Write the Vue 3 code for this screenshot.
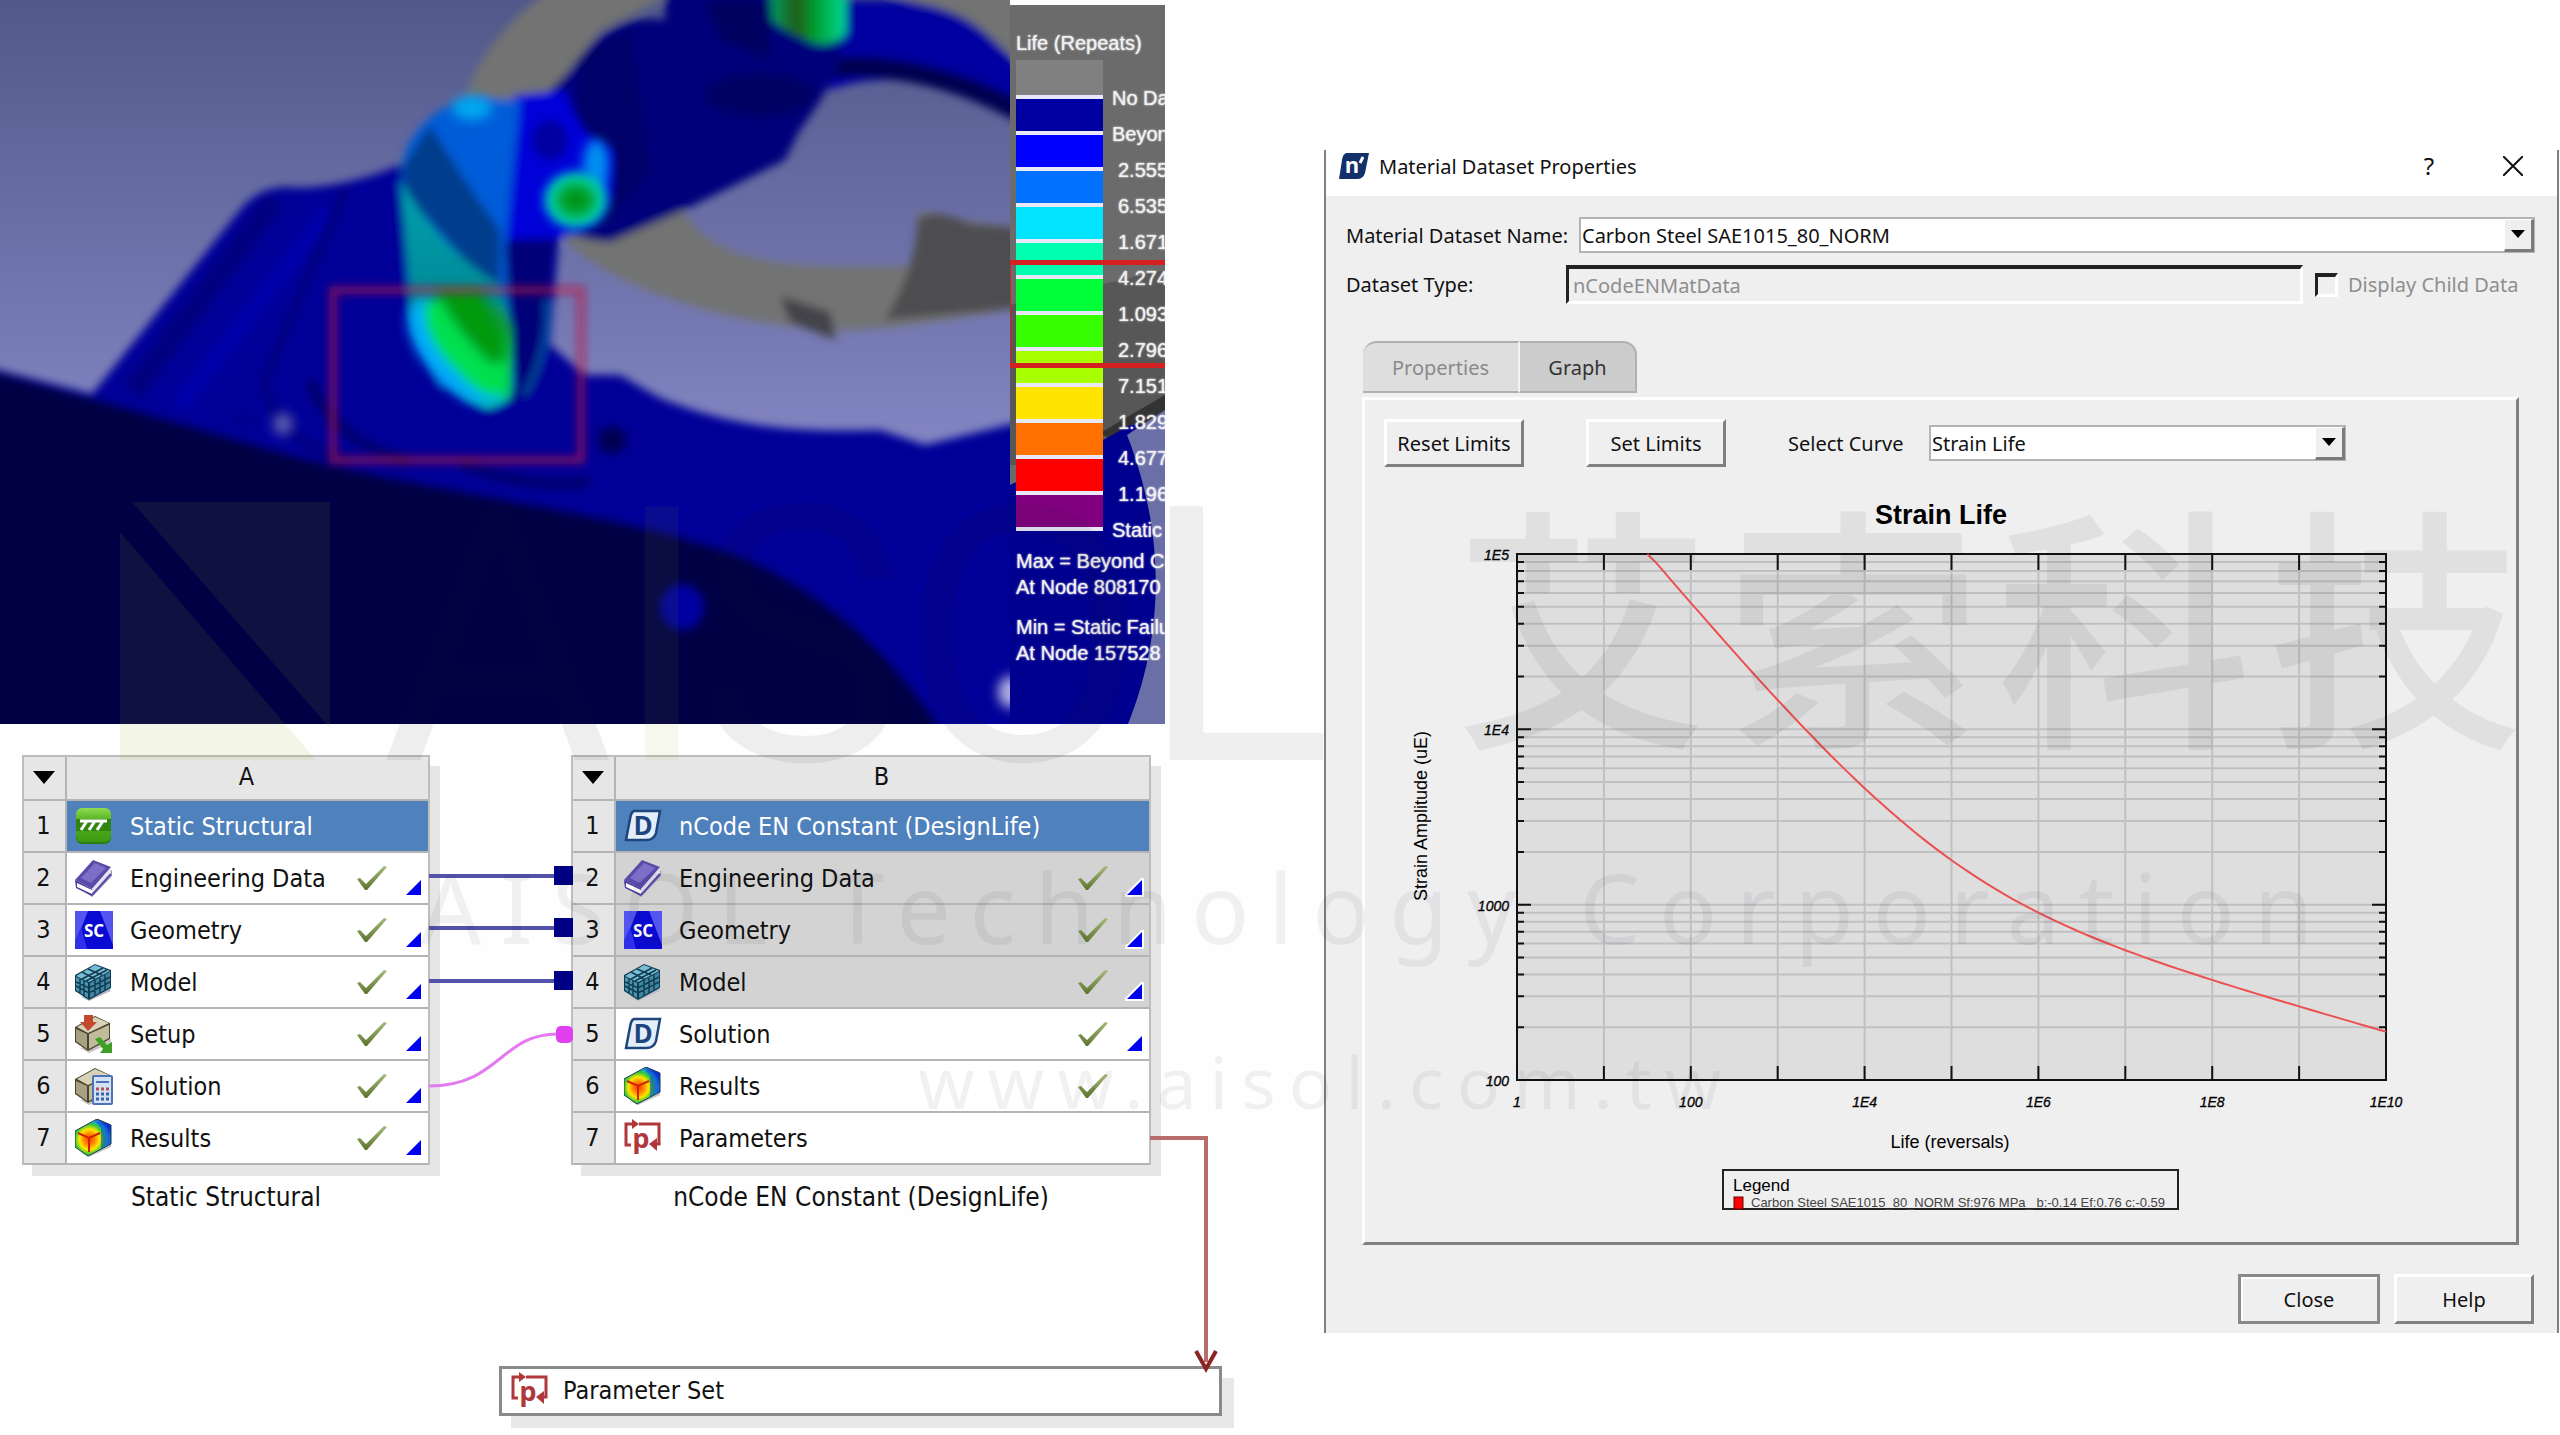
<script setup>
import { ref } from 'vue'

const swatches = [
  '#808080', '#0000a0', '#0000ff', '#0070ff', '#00e4ff', '#00ffb0', '#00ff38',
  '#38ff00', '#a8ff00', '#ffe400', '#ff7000', '#ff0000', '#800080'
]
const bands = ['No Data', 'Beyond Cutoff', '2.555e4', '6.535e3', '1.671e3', '4.274e2', '1.093e2', '2.796e1', '7.151', '1.829', '4.677e-1', '1.196e-1', 'Static Failure']

const systems = [
  {
    id: 'A',
    title: 'Static Structural',
    rows: [
      { icon: 'static', name: 'Static Structural', head: true },
      { icon: 'book', name: 'Engineering Data', check: true, tri: true },
      { icon: 'sc', name: 'Geometry', check: true, tri: true },
      { icon: 'mesh', name: 'Model', check: true, tri: true },
      { icon: 'setup', name: 'Setup', check: true, tri: true },
      { icon: 'calc', name: 'Solution', check: true, tri: true },
      { icon: 'results', name: 'Results', check: true, tri: true }
    ]
  },
  {
    id: 'B',
    title: 'nCode EN Constant (DesignLife)',
    rows: [
      { icon: 'design', name: 'nCode EN Constant (DesignLife)', head: true },
      { icon: 'book', name: 'Engineering Data', check: true, tri: true, shared: true },
      { icon: 'sc', name: 'Geometry', check: true, tri: true, shared: true },
      { icon: 'mesh', name: 'Model', check: true, tri: true, shared: true },
      { icon: 'design', name: 'Solution', check: true, tri: true },
      { icon: 'results', name: 'Results', check: true },
      { icon: 'param', name: 'Parameters' }
    ]
  }
]

const dataset = ref('Carbon Steel SAE1015_80_NORM')
const curve = ref('Strain Life')

// Plot frame and log-log scales
const L = 1517, R = 2386, T = 554, B = 1080
const px = d => L + (d * (R - L)) / 10
const py = e => B - ((e - 2) * (B - T)) / 3
const xGrid = [1, 2, 3, 4, 5, 6, 7, 8, 9].map(px)
const yGrid = []
for (let d = 2; d < 5; d++) {
  for (let k = 1; k < 10; k++) {
    if (d === 2 && k === 1) continue
    yGrid.push({ y: py(d + Math.log10(k)), major: k === 1 })
  }
}
const xLabels = [['1', 0], ['100', 2], ['1E4', 4], ['1E6', 6], ['1E8', 8], ['1E10', 10]]
const yLabels = [['1E5', 5], ['1E4', 4], ['1000', 3], ['100', 2]]

// Strain-life relation: Sf/E * N^b + Ef * N^c, in microstrain
const strain = d => 1e6 * ((976 / 207000) * 10 ** (-0.14 * d) + 0.76 * 10 ** (-0.59 * d))
const points = []
for (let d = 1.5; d <= 10.001; d += 0.1) {
  points.push(px(d).toFixed(1) + ',' + Math.max(T, py(Math.log10(strain(d)))).toFixed(1))
}
const curvePoints = points.join(' ')
</script>

<template>
  <main class="page">
    <!-- shared icon set -->
    <svg class="defs" aria-hidden="true">
      <defs>
        <linearGradient id="gGreen" x1="0" y1="0" x2="0" y2="1">
          <stop offset="0" stop-color="#8fdc50" /><stop offset=".4" stop-color="#4fae1c" /><stop offset="1" stop-color="#3f9a12" />
        </linearGradient>
        <radialGradient id="gHeat" cx=".4" cy=".55" r=".62">
          <stop offset="0" stop-color="#ff3a00" /><stop offset=".25" stop-color="#ff8a00" /><stop offset=".45" stop-color="#ffe600" />
          <stop offset=".65" stop-color="#35c935" /><stop offset=".82" stop-color="#20a8e0" /><stop offset="1" stop-color="#0a2fd0" />
        </radialGradient>
        <linearGradient id="gCheck" x1="0" y1="0" x2="0" y2="1">
          <stop offset="0" stop-color="#a4bc7c" /><stop offset="1" stop-color="#5c742c" />
        </linearGradient>
        <symbol id="static" viewBox="0 0 38 38">
          <rect x="1" y="3" width="35" height="34" rx="6" fill="#2d7d10" />
          <rect x="1" y="1" width="35" height="34" rx="6" fill="url(#gGreen)" />
          <rect x="1" y="12" width="35" height="12" fill="#2f8510" />
          <path d="M5 14H32M12 14L6 23M20 14L14 23M28 14L22 23" stroke="#fff" stroke-width="3" fill="none" />
        </symbol>
        <symbol id="book" viewBox="0 0 38 38">
          <path d="M3 28L17 38L37 17V11L18 31Z" fill="#9a96b8" />
          <path d="M0 21L18 1L36 8L17 30Z" fill="#5b4ba8" />
          <path d="M6 19L20 4L31 9L16 24Z" fill="#7c6fc8" />
          <path d="M0 21L17 30V37L1 29Z" fill="#4a3a98" />
          <path d="M2 24L17 31V35L2 28Z" fill="#fff" />
          <path d="M17 30L36 9V15L17 36Z" fill="#e4e2f2" /><path d="M17 36L36 15" stroke="#5b4ba8" stroke-width="2" />
        </symbol>
        <symbol id="sc" viewBox="0 0 38 38">
          <rect width="38" height="38" fill="#5454f0" />
          <path d="M13 0H25L38 34V38H0V34Z" fill="#0a0ad2" /><path d="M0 38V30L6 16L12 38Z" fill="#3030e8" />
          <text x="19" y="26" text-anchor="middle" class="sc-text">SC</text>
        </symbol>
        <symbol id="mesh" viewBox="0 0 38 38">
          <path d="M6 34L14 38L36 28L34 24Z" fill="#b8bfc4" />
          <path d="M0 12L20 1L36 7V25L14 37L0 28Z" fill="#123c50" />
          <path d="M1 13L20 2L35 8L14 19Z" fill="#79bcd6" /><path d="M1 14L13 20V35L1 27Z" fill="#4b95b4" /><path d="M15 20L35 9V24L15 35Z" fill="#3f86a4" />
          <path d="M7 9L20 16M13 6L27 12M7 16L28 5M11 18L32 7M5 16V30M9 18V33M1 19L14 25L35 14M1 23L14 30L35 19M20 17V33M25 15V30M30 12V27" stroke="#123c50" stroke-width="1.5" fill="none" />
        </symbol>
        <symbol id="block" viewBox="0 0 38 38">
          <path d="M5 33L14 38L36 28V24Z" fill="#c9c7c0" />
          <path d="M0 12L20 1L35 8V24L13 36L0 27Z" fill="#4b4530" />
          <path d="M2 12L20 2L34 8L13 18Z" fill="#d8d2b8" /><path d="M1 14L12 19V34L1 26Z" fill="#a8a080" /><path d="M14 19L34 10V23L14 34Z" fill="#c2bb9a" />
        </symbol>
        <symbol id="setup" viewBox="0 0 38 38">
          <use href="#block" />
          <path d="M9 0H18V7H22L13 16L5 7H9Z" fill="#c4482c" />
          <path d="M20 24L25 22L32 30L37 27V38H25L28 34Z" fill="#3da024" />
        </symbol>
        <symbol id="calc" viewBox="0 0 38 38">
          <use href="#block" />
          <rect x="17" y="8" width="21" height="30" rx="2" fill="#4d73b4" /><rect x="19" y="10" width="17" height="26" fill="#d5e2f6" />
          <path d="M21 15H34" stroke="#4d73b4" stroke-width="2" />
          <path d="M21 22H34" stroke="#b05050" stroke-width="3" stroke-dasharray="3 2" />
          <path d="M21 27H34M21 32H34" stroke="#3c62a8" stroke-width="3" stroke-dasharray="3 2" />
        </symbol>
        <symbol id="results" viewBox="0 0 38 38">
          <path d="M6 34L14 38L36 28V24Z" fill="#c4c4c4" />
          <path d="M0 12L22 0L36 6V25L13 37L0 28Z" fill="url(#gHeat)" stroke="#1c3c50" stroke-width="1" />
          <path d="M34 5V25L26 30V9L20 2Z" fill="#0a2fd0" opacity=".45" />
          <path d="M3 14L14 19L25 14M14 19V33" stroke="#d02000" stroke-width="2" fill="none" />
        </symbol>
        <symbol id="design" viewBox="0 0 38 38">
          <path d="M10 4H36L32 26Q30 33 22 33H2L6 12Q7 5 10 4Z" fill="#e4eefa" stroke="#1d467c" stroke-width="2.5" />
          <text x="19" y="28" text-anchor="middle" class="d-text">D</text>
        </symbol>
        <symbol id="param" viewBox="0 0 38 38">
          <path d="M11 5H2V26H7M15 5H35V25H30" fill="none" stroke="#b0383a" stroke-width="3" />
          <path d="M8 0L15 5L8 10ZM33 19V32L25 25Z" fill="#b0383a" />
          <text x="17" y="29" text-anchor="middle" class="p-text">p</text>
        </symbol>
        <symbol id="check" viewBox="0 0 30 24">
          <path d="M0 13L3 12L9 18L27 0L30 1L10 24H8Z" fill="url(#gCheck)" />
        </symbol>
      </defs>
    </svg>

    <section class="left">
      <div class="shot">
        <svg class="model" viewBox="0 0 1010 724" preserveAspectRatio="none" role="img" aria-label="Fatigue life contour">
          <defs>
            <linearGradient id="sky" x1="0" y1="0" x2="0" y2="1">
              <stop offset="0" stop-color="#52588a" /><stop offset=".6" stop-color="#8184c0" /><stop offset="1" stop-color="#8184c0" />
            </linearGradient>
            <linearGradient id="shank" x1="0" y1="0" x2="0" y2="1">
              <stop offset="0" stop-color="#00a0b0" /><stop offset=".5" stop-color="#008c98" /><stop offset=".62" stop-color="#109848" /><stop offset="1" stop-color="#00c050" />
            </linearGradient>
            <radialGradient id="hot">
              <stop offset="0" stop-color="#068c08" /><stop offset=".4" stop-color="#00a838" /><stop offset=".7" stop-color="#00d8b0" /><stop offset="1" stop-color="#0060ff" stop-opacity="0" />
            </radialGradient>
            <linearGradient id="tab" x1="0" y1="0" x2="1" y2="0">
              <stop offset="0" stop-color="#00a060" /><stop offset=".35" stop-color="#205c18" /><stop offset=".6" stop-color="#00a030" /><stop offset="1" stop-color="#00d898" />
            </linearGradient>
            <filter id="b3" x="-10%" y="-10%" width="120%" height="120%"><feGaussianBlur stdDeviation="4" /></filter>
            <filter id="b8" x="-40%" y="-40%" width="180%" height="180%"><feGaussianBlur stdDeviation="6" /></filter>
          </defs>
          <rect width="1010" height="724" fill="url(#sky)" />
          <g filter="url(#b3)">
            <path d="M465 105C470 70 500 25 550 -10H680L600 30L545 100L500 115Z" fill="#727372" />
            <path d="M880 -10H1020V60L965 20Z" fill="#727372" />
            <path d="M560 235L680 205C700 245 740 262 820 266H930L915 215Q930 208 960 220L1020 228V308C960 318 900 328 850 330C740 330 620 290 570 245Z" fill="#727372" />
            <path d="M918 218Q940 208 970 224L1020 228V308L885 320Q915 270 918 218Z" fill="#4e4e50" />
            <path d="M780 296L830 312L836 340L790 322Z" fill="#424248" />
            <path d="M820 0H900C960 8 985 25 1020 70V120C950 78 880 70 830 90Z" fill="#0000a0" />
            <path d="M820 68Q920 58 1020 112" fill="none" stroke="#000050" stroke-width="20" />
            <path d="M-10 368L92 394L240 210Q262 182 300 188Q350 186 400 165L560 225L550 345L585 375H620L660 398C740 430 800 432 880 430L925 445L1020 422V734H-10Z" fill="#000098" />
            <path d="M275 200L132 392" stroke="#000080" stroke-width="22" />
            <path d="M330 210L180 405" stroke="#0000ac" stroke-width="16" />
            <path d="M345 190L265 380Q270 440 350 460" fill="none" stroke="#000080" stroke-width="10" />
            <path d="M310 380Q330 440 410 462M460 462Q520 490 590 482" fill="none" stroke="#000070" stroke-width="12" />
            <path d="M-10 370L100 400L300 457C480 500 640 515 750 560C850 605 910 680 945 734H-10Z" fill="#000044" />
            <path d="M665 -10H840V60Q830 90 800 130L785 160L680 212L610 242Q560 240 530 200L530 110L570 70Q610 10 665 20Z" fill="#00007a" />
            <path d="M580 60Q600 40 630 30L650 170L600 230L580 150Z" fill="#000068" />
            <ellipse cx="760" cy="95" rx="55" ry="22" fill="#000064" />
            <path d="M705 0H770V60L720 40Z" fill="#000060" />
            <path d="M770 -10H846V32Q840 44 818 44Q790 36 772 20Z" fill="url(#tab)" />
            <path d="M500 230H555L545 345Q540 390 520 400L500 380Z" fill="#000078" />
            <path d="M515 95L565 90Q580 140 612 150V190Q600 230 560 238L505 240L480 150Z" fill="#0000d8" />
            <ellipse cx="550" cy="140" rx="18" ry="20" fill="#0000a0" />
            <path d="M402 170Q404 135 440 110L475 98L520 100L505 250L515 390L440 385L408 290Z" fill="#005cd8" />
            <path d="M404 165L430 125Q470 190 500 230V300Q440 230 404 195Z" fill="#003c8c" />
            <path d="M400 180Q440 250 500 285L512 330L510 398L488 408Q430 375 412 310Z" fill="url(#shank)" />
            <path d="M547 300Q550 350 524 395" fill="none" stroke="#0070b0" stroke-opacity=".7" stroke-width="5" />
          </g>
          <g filter="url(#b8)">
            <ellipse cx="472" cy="108" rx="20" ry="12" fill="#00a8f0" />
            <ellipse cx="596" cy="165" rx="13" ry="26" fill="#0090f0" />
            <path d="M410 305Q400 340 440 380Q475 416 504 402L508 385Q440 350 425 295Z" fill="#00a8ff" />
            <path d="M424 305Q422 340 457 372Q487 406 508 394V340L460 290Z" fill="#00e050" />
            <path d="M436 290Q450 325 492 365L506 360V340L480 290Z" fill="#069a10" />
            <ellipse cx="243" cy="420" rx="14" ry="10" fill="#00008c" />
            <ellipse cx="283" cy="424" rx="10" ry="11" fill="#5c5cb0" />
            <ellipse cx="612" cy="440" rx="14" ry="13" fill="#00004c" />
            <ellipse cx="1010" cy="692" rx="12" ry="16" fill="#b0b0e0" />
          </g>
          <g filter="url(#b3)">
            <ellipse cx="576" cy="200" rx="38" ry="34" fill="url(#hot)" />
            <ellipse cx="682" cy="607" rx="22" ry="23" fill="#0000a0" />
            <rect x="333" y="290" width="248" height="170" fill="none" stroke="#c01040" stroke-opacity=".6" stroke-width="8" />
          </g>
        </svg>
        <aside class="scale">
          <svg class="scale-bg" viewBox="0 0 155 719" preserveAspectRatio="none" aria-hidden="true">
            <rect width="155" height="719" fill="#6a6b6a" />
            <path d="M0 300L155 265V460H0Z" fill="#565756" />
            <path d="M90 428L155 390V430L110 440Z" fill="#333" />
            <path d="M0 480L95 434L120 420H155V719H0Z" fill="#00008e" />
            <path d="M117 430L155 405V719H118C150 640 160 540 117 430Z" fill="#6a6fa8" />
          </svg>
          <p class="scale-title">Life (Repeats)</p>
          <div class="scale-body">
            <ul class="bar"><li v-for="c in swatches" :key="c" :style="{ background: c }"></li></ul>
            <ul class="bands"><li v-for="(b, i) in bands" :key="b" :class="{ num: i > 1 && i < 12 }">{{ b }}</li></ul>
          </div>
          <p class="stat">Max = Beyond Cutoff<br />At Node 808170</p>
          <p class="stat">Min = Static Failure<br />At Node 157528</p>
          <div class="range"></div>
        </aside>
      </div>

      <div class="canvas">
        <figure v-for="s in systems" :key="s.id" class="node" :class="'node-' + s.id">
          <table>
            <colgroup><col class="num-col" /><col /></colgroup>
            <thead>
              <tr><th><svg class="caret" viewBox="0 0 22 13"><path d="M0 0H22L11 13Z" /></svg></th><th>{{ s.id }}</th></tr>
            </thead>
            <tbody>
              <tr v-for="(r, i) in s.rows" :key="i" :class="{ head: r.head, shared: r.shared }">
                <th>{{ i + 1 }}</th>
                <td>
                  <div class="cell">
                    <svg class="icon"><use :href="'#' + r.icon" /></svg>
                    <span class="name">{{ r.name }}</span>
                    <svg v-if="r.check" class="check"><use href="#check" /></svg>
                    <svg v-if="r.tri" class="tri" viewBox="0 0 19 19"><path d="M17 2V17H2Z" fill="#0000f0" :stroke="r.shared ? '#fff' : 'none'" stroke-width="4" paint-order="stroke" /></svg>
                  </div>
                </td>
              </tr>
            </tbody>
          </table>
          <figcaption>{{ s.title }}</figcaption>
        </figure>

        <div class="param-set">
          <svg class="icon"><use href="#param" /></svg>
          <span>Parameter Set</span>
        </div>

        <svg class="links" viewBox="0 724 1324 711" aria-hidden="true">
          <g v-for="y in [876, 928, 981]" :key="y">
            <path :d="`M429 ${y}H556`" stroke="#5252a8" stroke-width="4" />
            <rect x="554" :y="y - 10" width="19" height="19" fill="#000084" />
          </g>
          <path d="M429 1086C500 1086 500 1034 558 1034" fill="none" stroke="#e47af0" stroke-width="3" />
          <rect x="556" y="1026" width="17" height="17" rx="5" fill="#e040f0" />
          <path d="M1150 1138H1206V1362" fill="none" stroke="#b86c6c" stroke-width="4" />
          <path d="M1196 1351L1206 1369L1216 1351" fill="none" stroke="#8c2424" stroke-width="4" />
        </svg>
      </div>
    </section>

    <section class="dialog" aria-label="Material Dataset Properties">
      <header class="titlebar">
        <svg class="logo" viewBox="0 0 30 26">
          <path d="M8 0H30L26 20Q24 26 18 26H0L3 7Q4 0 8 0Z" fill="#12306a" />
          <text x="13" y="20" text-anchor="middle" class="n-text">n</text>
          <path d="M21 10L24 4" stroke="#fff" stroke-width="3" />
        </svg>
        <h1>Material Dataset Properties</h1>
        <button class="tool" type="button">?</button>
        <button class="tool" type="button" aria-label="Close window"><svg viewBox="0 0 20 20"><path d="M0 0L20 20M20 0L0 20" stroke="#111" stroke-width="2" /></svg></button>
      </header>

      <div class="body">
        <div class="row">
          <label class="lab-name" for="ds">Material Dataset Name:</label>
          <div class="combo"><select id="ds" v-model="dataset"><option>Carbon Steel SAE1015_80_NORM</option></select><span class="drop"></span></div>
        </div>
        <div class="row second">
          <label class="lab-type" for="type">Dataset Type:</label>
          <input id="type" class="field" type="text" value="nCodeENMatData" disabled />
          <label class="child"><input type="checkbox" disabled />Display Child Data</label>
        </div>

        <nav class="tabs">
          <button type="button" class="tab dim">Properties</button>
          <button type="button" class="tab active">Graph</button>
        </nav>

        <div class="panel">
          <div class="toolbar">
            <button type="button" class="btn">Reset Limits</button>
            <button type="button" class="btn">Set Limits</button>
            <label for="cv">Select Curve</label>
            <div class="combo small"><select id="cv" v-model="curve"><option>Strain Life</option></select><span class="drop"></span></div>
          </div>

          <svg class="chart" viewBox="1365 480 1151 740" role="img" aria-label="Strain Life chart">
            <text x="1941" y="524" text-anchor="middle" class="c-title">Strain Life</text>
            <rect :x="L" :y="T" :width="R - L" :height="B - T" fill="#dfdedf" />
            <g stroke="#c0c0c1" stroke-width="2">
              <path v-for="x in xGrid" :key="x" :d="`M${x} ${T}V${B}`" />
              <path v-for="g in yGrid" :key="g.y" :d="`M${L} ${g.y}H${R}`" />
            </g>
            <g stroke="#111" stroke-width="2">
              <path v-for="x in xGrid" :key="x" :d="`M${x} ${T}v16M${x} ${B}v-14`" />
              <path v-for="g in yGrid" :key="g.y" :d="g.major ? `M${L} ${g.y}h14M${R} ${g.y}h-14` : `M${L} ${g.y}h7M${R} ${g.y}h-7`" />
            </g>
            <rect :x="L" :y="T" :width="R - L" :height="B - T" fill="none" stroke="#111" stroke-width="2" />
            <polyline :points="curvePoints" fill="none" stroke="#ec5050" stroke-width="2" />
            <text v-for="t in xLabels" :key="t[0]" :x="px(t[1])" y="1107" text-anchor="middle" class="tick">{{ t[0] }}</text>
            <text v-for="t in yLabels" :key="t[0]" x="1509" :y="py(t[1]) + 6" text-anchor="end" class="tick">{{ t[0] }}</text>
            <text x="1950" y="1148" text-anchor="middle" class="axis">Life (reversals)</text>
            <text transform="translate(1427 816) rotate(-90)" text-anchor="middle" class="axis">Strain Amplitude (uE)</text>
            <rect x="1723" y="1170" width="455" height="39" fill="none" stroke="#222" stroke-width="2" />
            <text x="1733" y="1191" class="leg">Legend</text>
            <rect x="1734" y="1197" width="9" height="12" fill="#f00" stroke="#600" />
            <text x="1751" y="1207" class="leg-item">Carbon Steel SAE1015_80_NORM Sf:976 MPa_ b:-0.14 Ef:0.76 c:-0.59</text>
          </svg>
        </div>

        <footer class="actions">
          <button type="button" class="btn framed">Close</button>
          <button type="button" class="btn">Help</button>
        </footer>
      </div>
    </section>

    <svg class="mark" viewBox="0 0 2560 1435" aria-hidden="true">
      <g fill="#91af19" fill-opacity=".1"><path d="M132 502H330V728Z" /><path d="M120 532L316 760H120Z" /></g>
      <g class="brand">
        <text x="381" y="760">A</text><text x="613" y="760" class="lime">I</text><text x="694" y="760">S</text><text x="900" y="760">O</text><text x="1140" y="760">L</text>
      </g>
      <text x="1454" y="728" class="cjk">艾索科技</text>
      <text x="420" y="944" class="corp">AISOL Technology Corporation</text>
      <text x="918" y="1109" class="site">www.aisol.com.tw</text>
    </svg>
  </main>
</template>

<style>
body { margin: 0; background: #fefefe; }
</style>

<style scoped>
* { box-sizing: border-box; }
.page { position: relative; display: grid; grid-template-columns: 1324fr 1236fr; align-items: start; overflow: hidden; font-family: "Noto Sans", "Open Sans", sans-serif; font-size: 20px; color: #111; }
.defs { position: absolute; width: 0; height: 0; }
.left { min-width: 0; }

.shot { display: flex; height: 724px; }
.model { width: 1010px; height: 724px; }
.scale { position: relative; overflow: hidden; width: 155px; margin-top: 5px; padding-left: 6px; color: #f2f2f2; font: 20px/26px "Liberation Sans", Arial, sans-serif; text-shadow: 0 0 2px #fff; white-space: nowrap; }
.scale-bg { position: absolute; left: 0; top: 0; width: 100%; height: 100%; }
.scale > p, .scale-body { position: relative; margin: 0; }
.scale-title { padding: 25px 0 4px; }
.scale-body { display: flex; gap: 9px; }
.scale ul { margin: 0; padding: 0; list-style: none; }
.bar { width: 90px; }
.bar li { width: 87px; height: 36px; border-bottom: 4px solid #e8e8fa; }
.bar li:first-child { height: 39px; }
.scale .bands { padding-top: 20px; }
.bands li { height: 36px; line-height: 36px; }
.bands .num { padding-left: 6px; }
.scale .stat { padding-bottom: 14px; }
.range { position: absolute; left: 0; right: 0; top: 255px; height: 108px; border: solid #d42020; border-width: 5px 0 5px 1px; }

.canvas { position: relative; height: 711px; font: 25px/28px "DejaVu Sans Condensed", "Noto Sans", sans-serif; }
.node { position: absolute; top: 31px; margin: 0; }
.node-A { left: 22px; width: 408px; }
.node-B { left: 571px; width: 580px; }
.node table { width: 100%; table-layout: fixed; border-collapse: separate; border-spacing: 0; border: 2px solid #bdbdbd; border-bottom: 0; background: #fff; box-shadow: 10px 11px 0 #e6e6e6; }
.num-col { width: 43px; }
.node th { padding: 0 2px 0 0; font-weight: 400; background: #e7e6e7; border-bottom: 2px solid #b4b4b4; text-align: center; }
.node th:first-child { border-right: 2px solid #b4b4b4; }
.node thead th { height: 44px; padding-bottom: 2px; }
.node tbody th { height: 52px; }
.node td { padding: 0; border-bottom: 2px solid #b4b4b4; }
.caret { display: block; width: 22px; height: 13px; margin: 0 auto; }
.cell { position: relative; display: flex; align-items: center; height: 50px; padding: 0 41px 0 8px; }
.head td { background: #4f81bd; color: #fff; }
.shared td { background: #d3d3d3; }
.icon { width: 38px; height: 38px; flex: none; }
.name { margin-left: 17px; padding-top: 2px; flex: 1; white-space: nowrap; }
.check { width: 30px; height: 24px; }
.tri { position: absolute; right: 5px; bottom: 6px; width: 19px; height: 19px; }
figcaption { margin-top: 18px; font-size: 26px; text-align: center; white-space: nowrap; }
.param-set { position: absolute; left: 499px; top: 642px; width: 723px; height: 50px; display: flex; align-items: center; gap: 14px; padding-left: 9px; background: #fff; border: 3px solid #8a8a8a; box-shadow: 12px 12px 0 #e8e8e8; }
.links { position: absolute; left: 0; top: 0; width: 1324px; height: 711px; }
.sc-text { font: 700 17px "Open Sans", sans-serif; fill: #fff; }
.d-text { font: 700 26px "Open Sans", sans-serif; fill: #1d467c; }
.p-text { font: 700 27px "Noto Sans", sans-serif; fill: #b0383a; }
.n-text { font: 700 22px "Open Sans", sans-serif; fill: #fff; }

.dialog { margin: 150px 1px 0 0; border: solid #808080; border-width: 0 2px; background: #f0eff0; }
.titlebar { display: flex; align-items: center; height: 46px; padding: 0 24px 0 13px; background: #fff; }
.logo { width: 30px; height: 26px; margin-bottom: 14px; }
h1 { flex: 1; margin: 0 0 12px 10px; font-size: 20px; line-height: 28px; font-weight: 400; }
.tool { width: 40px; height: 40px; margin: 0 0 14px 44px; padding: 0; border: 0; background: none; font: 24px/28px "Noto Sans", sans-serif; color: #111; }
.tool svg { width: 20px; height: 20px; display: block; margin: 0 auto; }
.body { padding: 21px 22px 9px 20px; }
.row { display: flex; align-items: center; height: 36px; }
.row.second { height: 39px; margin-top: 12px; }
.lab-name { width: 233px; }
.lab-type { width: 220px; }
.combo { position: relative; flex: 1; height: 36px; }
.combo select { appearance: none; width: 100%; height: 100%; margin: 0; padding: 0 40px 0 1px; border: 2px solid #b4b4b4; border-radius: 0; background: #fff; font: 20px "Noto Sans", sans-serif; color: #111; }
.drop { position: absolute; top: 2px; right: 1px; bottom: 1px; width: 30px; background: #f0eff0; border: solid; border-width: 1px 3px 3px 1px; border-color: #fff #7c7c7c #7c7c7c #fff; pointer-events: none; }
.drop::after { content: ""; position: absolute; left: 6px; top: 10px; border: solid transparent; border-width: 8px 7px 0; border-top-color: #000; }
.field { flex: 1; min-width: 0; height: 39px; padding: 0 4px; border: solid; border-width: 4px 3px 3px 3px; border-color: #222 #fff #fff #222; background: #f0eff0; font: 20px "Noto Sans", sans-serif; color: #8e8e8e; }
.child { display: flex; align-items: center; gap: 10px; width: 232px; padding-left: 12px; color: #8e8e8e; white-space: nowrap; }
.child input { appearance: none; width: 23px; height: 24px; margin: 0; border: solid; border-width: 4px 3px 3px; border-color: #222 #fff #fff #222; }
.tabs { display: flex; margin: 37px 0 0 17px; }
.tab { height: 52px; padding: 0; border: solid #b0b0b0; border-width: 2px 0; font: 20px "Noto Sans", sans-serif; }
.tab.dim { width: 157px; border-radius: 14px 0 0 0; background: #dedede; color: #8a8a8a; border-right: 2px solid #f4f4f4; }
.tab.active { width: 117px; border-radius: 0 14px 0 0; background: #cdcccd; color: #333; border-right-width: 2px; }
.panel { margin: 4px 16px 0; border: 3px solid; border-color: #fdfdfd #808080 #808080 #fdfdfd; padding: 19px 0 22px; }
.toolbar { display: flex; align-items: center; height: 48px; padding-left: 19px; margin-bottom: 13px; }
.btn { width: 140px; height: 48px; padding: 0; border: 3px solid; border-color: #fff #808080 #808080 #fff; background: #f0eff0; font: 20px "Noto Sans", sans-serif; color: #111; }
.toolbar .btn { margin-right: 62px; }
.toolbar label { width: 141px; }
.combo.small { flex: none; width: 417px; }
.chart { display: block; width: 100%; }
.c-title { font: 700 27px "Liberation Sans", Arial, sans-serif; fill: #000; }
.tick { font: italic 14px "Liberation Sans", Arial, sans-serif; fill: #000; stroke: #000; stroke-width: .3px; }
.axis { font: 18px "Liberation Sans", Arial, sans-serif; }
.leg { font: 17px "Liberation Sans", Arial, sans-serif; }
.leg-item { font: 13px "Liberation Sans", Arial, sans-serif; fill: #444; }
.actions { display: flex; justify-content: flex-end; gap: 14px; margin-top: 29px; padding-right: 1px; }
.actions .btn { height: 50px; }
.actions .framed { width: 142px; border-color: #8a8a8a; box-shadow: inset 2px 2px 0 #fff; }

.mark { position: absolute; left: 0; top: 0; width: 100%; pointer-events: none; fill: #16161e; fill-opacity: .07; }
.brand { font: 357px Roboto, sans-serif; }
.lime { fill: #91af19; }
.cjk { font: 500 256px "Noto Sans CJK TC", sans-serif; letter-spacing: 15px; }
.corp { font: 96px "Noto Sans", sans-serif; letter-spacing: 19px; fill-opacity: .06; }
.site { font: 72px "Noto Sans", sans-serif; letter-spacing: 13px; fill-opacity: .06; }
</style>
